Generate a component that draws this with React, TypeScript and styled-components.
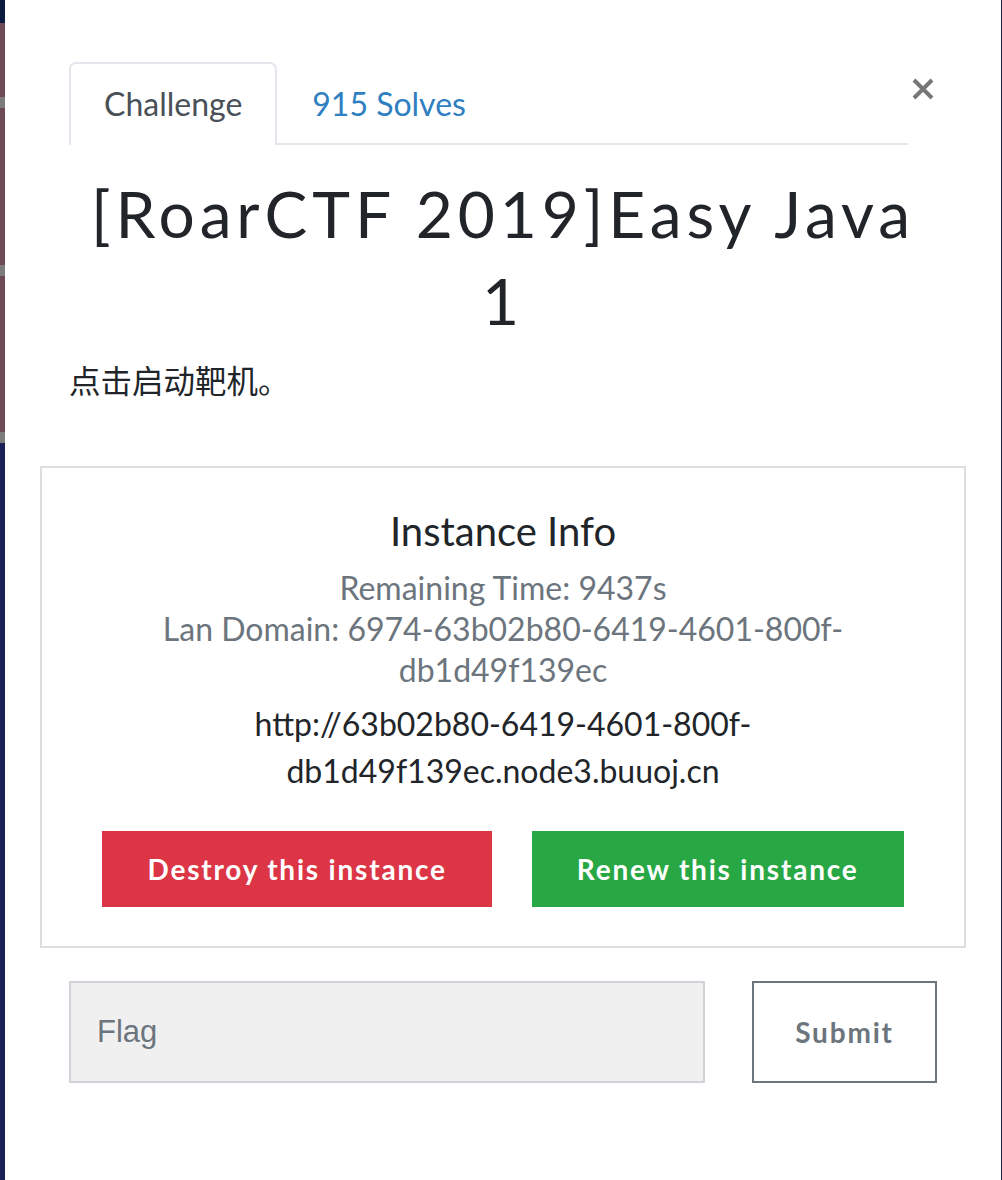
import styled, { createGlobalStyle } from 'styled-components'

const GlobalStyle = createGlobalStyle`
	html, body {
		margin: 0;
		padding: 0;
	}
	body {
		background: #141c4a;
		font-family: Lato, "Noto Sans", sans-serif;
		color: #212529;
	}
	* {
		box-sizing: border-box;
	}
`

const Page = styled.div`
	display: flex;
	min-height: 1180px;
	padding-right: 1px;
	background: #141c4a;
`

// the page behind the modal shows only as a thin strip on the left
const Backdrop = styled.div`
	width: 5px;
	flex-shrink: 0;
	background: linear-gradient(
		to bottom,
		#0c1a40 0 23px,
		#6e4a58 23px 97px,
		#7c7c7c 97px 108px,
		#6e4a58 108px 265px,
		#7c7c7c 265px 276px,
		#6e4a58 276px 432px,
		#7c7c7c 432px 443px,
		#1b2156 443px
	);
`

const Modal = styled.div`
	flex: 1;
	background: #fff;
	padding: 62px 64px 60px;
`

const Header = styled.div`
	display: flex;
	align-items: flex-start;
`

const Tabs = styled.nav`
	flex: 1;
	display: flex;
	border-bottom: 2px solid #e3e6ea;
`

const Tab = styled.a<{ $active?: boolean }>`
	display: block;
	margin-bottom: -2px;
	padding: 19px 33px 21px;
	border: 2px solid ${p => (p.$active ? '#e3e6ea' : 'transparent')};
	border-bottom: none;
	border-radius: 7px 7px 0 0;
	background: ${p => (p.$active ? '#fff' : 'transparent')};
	font-size: 32px;
	line-height: 41px;
	color: ${p => (p.$active ? '#495057' : '#2f7fc1')};
	text-decoration: none;
	cursor: pointer;
`

const Close = styled.button`
	width: 29px;
	height: 29px;
	margin-top: 12px;
	padding: 0;
	border: none;
	background: none;
	display: flex;
	align-items: center;
	justify-content: center;
	cursor: pointer;
`

const Title = styled.h1`
	margin: 25px 0 0;
	padding: 0 10px;
	text-align: center;
	font-family: Lato, sans-serif;
	font-weight: 400;
	font-size: 64px;
	line-height: 87px;
	letter-spacing: 4.9px;
	color: #212529;
`

const Description = styled.p`
	margin: 16px 0 0;
	font-family: Lato, "Noto Sans CJK SC", sans-serif;
	font-size: 31.5px;
	line-height: 42px;
	color: #212529;
`

const InstanceBox = styled.section`
	margin: 64px -29px 0;
	border: 2px solid #dedede;
	padding: 39px 20px 39px;
	text-align: center;
`

const BoxTitle = styled.h4`
	margin: 0;
	font-weight: 400;
	font-size: 40px;
	line-height: 48px;
	color: #212529;
`

const Muted = styled.div`
	margin: 12px auto 0;
	max-width: 700px;
	font-size: 32px;
	line-height: 41px;
	color: #6c757d;
	word-break: break-word;
`

const Url = styled.p`
	margin: 10px auto 0;
	max-width: 520px;
	font-size: 32px;
	line-height: 47px;
	color: #212529;
	word-break: break-word;
`

const Actions = styled.div`
	display: flex;
	justify-content: center;
	gap: 40px;
	margin-top: 37px;
`

const ActionButton = styled.button<{ $tone: 'danger' | 'success' }>`
	height: 76px;
	padding: 0 45px;
	border: none;
	background: ${p => (p.$tone === 'danger' ? '#dc3545' : '#28a745')};
	color: #fff;
	font-family: Lato, sans-serif;
	font-weight: 700;
	font-size: 28px;
	letter-spacing: 1.8px;
	cursor: pointer;
`

const FlagForm = styled.form`
	display: flex;
	gap: 47px;
	margin-top: 33px;
`

const FlagInput = styled.input`
	flex: 1;
	height: 102px;
	padding: 0 26px;
	border: 2px solid #cfd3d7;
	background: #f0f0f0;
	font-family: "Liberation Sans", Arial, sans-serif;
	font-size: 31px;
	color: #495057;
	outline: none;
	&::placeholder {
		color: #6c757d;
	}
`

const SubmitButton = styled.button`
	width: 185px;
	height: 102px;
	border: 2px solid #6c757d;
	background: #fff;
	color: #6c757d;
	font-family: Lato, sans-serif;
	font-weight: 700;
	font-size: 28px;
	letter-spacing: 1.8px;
	cursor: pointer;
`

const CloseIcon = () => (
	<svg width="24" height="24" viewBox="0 0 24 24">
		<path d="M3 3 L21 21 M21 3 L3 21" stroke="#777" strokeWidth="4" strokeLinecap="butt" />
	</svg>
)

export default function App() {
	return (
		<>
			<GlobalStyle />
			<Page>
				<Backdrop />
				<Modal>
					<Header>
						<Tabs>
							<Tab $active>Challenge</Tab>
							<Tab>915 Solves</Tab>
						</Tabs>
						<Close aria-label="Close">
							<CloseIcon />
						</Close>
					</Header>
					<Title>[RoarCTF 2019]Easy Java 1</Title>
					<Description>点击启动靶机。</Description>
					<InstanceBox>
						<BoxTitle>Instance Info</BoxTitle>
						<Muted>
							Remaining Time: 9437s
							<br />
							Lan Domain: 6974-63b02b80-6419-4601-800f-db1d49f139ec
						</Muted>
						<Url>http://63b02b80-6419-4601-800f-db1d49f139ec.node3.buuoj.cn</Url>
						<Actions>
							<ActionButton $tone="danger">Destroy this instance</ActionButton>
							<ActionButton $tone="success">Renew this instance</ActionButton>
						</Actions>
					</InstanceBox>
					<FlagForm onSubmit={e => e.preventDefault()}>
						<FlagInput placeholder="Flag" />
						<SubmitButton type="submit">Submit</SubmitButton>
					</FlagForm>
				</Modal>
			</Page>
		</>
	)
}
